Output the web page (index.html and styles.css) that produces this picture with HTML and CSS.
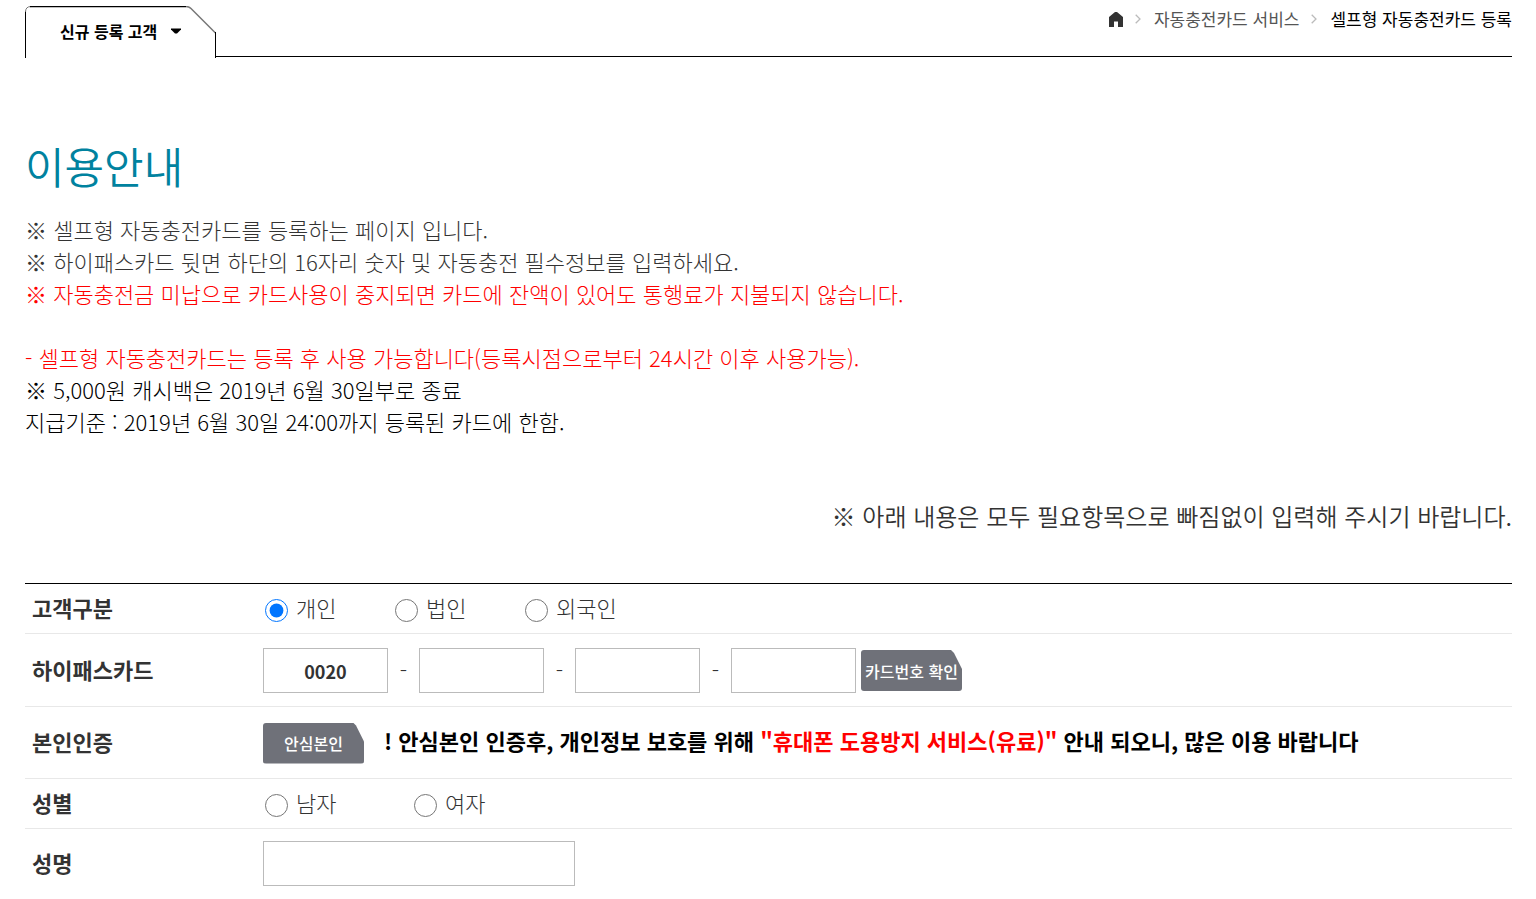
FILE: index.html
```html
<!DOCTYPE html>
<html lang="ko">
<head>
  <meta charset="UTF-8">
  <title>셀프형 자동충전카드 등록</title>
  <link rel="stylesheet" href="styles.css">
</head>
<body>
  <header class="top">
    <button type="button" class="tab">
      <svg class="tab-line" viewBox="0 0 191 52" fill="none">
        <path d="M.5 52V5" stroke="#000"/>
        <path d="M.5 6Q.5 .5 6 .5" stroke="#777"/>
        <path d="M5 .5H161" stroke="#000" stroke-width="1.400"/>
        <path d="M161 .5Q164 .5 166 2.500L190.500 27" stroke="#777" stroke-width="1.500"/>
        <path d="M190.500 26V52" stroke="#000"/>
      </svg>
      <span>신규 등록 고객</span>
      <svg class="tab-arrow" viewBox="0 0 10 6"><path d="M0 .5H10V1.500L6 5.500H4L0 1.500Z" fill="#000"/></svg>
    </button>
    <nav class="path">
      <a href="#" aria-label="홈"><svg class="home" viewBox="0 0 14 15"><path d="M6 0H8L14 5V15H9V9.500H5V15H0V5Z" fill="#333"/></svg></a>
      <svg class="next" viewBox="0 0 6 10"><path d="M.7 .7L5 5L.7 9.300" fill="none" stroke="#bbb" stroke-width="1.300"/></svg>
      <a href="#">자동충전카드 서비스</a>
      <svg class="next" viewBox="0 0 6 10"><path d="M.7 .7L5 5L.7 9.300" fill="none" stroke="#bbb" stroke-width="1.300"/></svg>
      <a href="#" class="current">셀프형 자동충전카드 등록</a>
    </nav>
  </header>

  <main>
    <h1>이용안내</h1>
    <div class="guide">
      <p>※ 셀프형 자동충전카드를 등록하는 페이지 입니다.</p>
      <p>※ 하이패스카드 뒷면 하단의 16자리 숫자 및 자동충전 필수정보를 입력하세요.</p>
      <p class="red">※ 자동충전금 미납으로 카드사용이 중지되면 카드에 잔액이 있어도 통행료가 지불되지 않습니다.</p>
      <br>
      <p class="red">- 셀프형 자동충전카드는 등록 후 사용 가능합니다(등록시점으로부터 24시간 이후 사용가능).</p>
      <p class="black">※ 5,000원 캐시백은 2019년 6월 30일부로 종료</p>
      <p class="black">지급기준 : 2019년 6월 30일 24:00까지 등록된 카드에 한함.</p>
    </div>
    <p class="notice">※ 아래 내용은 모두 필요항목으로 빠짐없이 입력해 주시기 바랍니다.</p>

    <form class="form">
      <div class="row short" role="radiogroup" aria-labelledby="type">
        <span class="title" id="type">고객구분</span>
        <div class="field types">
          <label><input type="radio" name="type" checked>개인</label>
          <label><input type="radio" name="type">법인</label>
          <label><input type="radio" name="type">외국인</label>
        </div>
      </div>
      <div class="row">
        <label class="title" for="card1">하이패스카드</label>
        <div class="field card">
          <input type="text" id="card1" value="0020" maxlength="4">
          <span>-</span>
          <input type="text" aria-label="카드번호 2" maxlength="4">
          <span>-</span>
          <input type="text" aria-label="카드번호 3" maxlength="4">
          <span>-</span>
          <input type="text" aria-label="카드번호 4" maxlength="4">
          <button type="button" class="btn">카드번호 확인</button>
        </div>
      </div>
      <div class="row">
        <span class="title">본인인증</span>
        <div class="field">
          <button type="button" class="btn">안심본인</button>
          <strong class="info">! 안심본인 인증후, 개인정보 보호를 위해 <span class="red">"휴대폰 도용방지 서비스(유료)"</span> 안내 되오니, 많은 이용 바랍니다</strong>
        </div>
      </div>
      <div class="row short" role="radiogroup" aria-labelledby="gender">
        <span class="title" id="gender">성별</span>
        <div class="field genders">
          <label><input type="radio" name="gender">남자</label>
          <label><input type="radio" name="gender">여자</label>
        </div>
      </div>
      <div class="row">
        <label class="title" for="name">성명</label>
        <div class="field">
          <input type="text" class="name" id="name">
        </div>
      </div>
    </form>
  </main>
</body>
</html>
```
FILE: styles.css
```css
* {
  box-sizing: border-box;
}
body {
  margin: 0;
  padding: 6px 24px 0 25px;
  background-color: #fff;
  color: #333;
  font-family: "Noto Sans CJK KR", sans-serif;
  font-size: 22px;
  font-weight: 300;
  line-height: 32px;
}
p, h1 {
  margin: 0;
}
a {
  color: #555;
  text-decoration: none;
}
button, input {
  font-family: inherit;
}
.red {
  color: #f00;
}
.black {
  color: #000;
}

/* header */
.top {
  display: flex;
}
.tab {
  position: relative;
  display: flex;
  align-items: center;
  gap: 14px;
  width: 191px;
  height: 52px;
  padding: 0 0 2px 35px;
  border: 0;
  background: none;
  color: #000;
  font-size: 16px;
  font-weight: 700;
  white-space: nowrap;
}
.tab-line {
  position: absolute;
  top: 0;
  left: 0;
  width: 100%;
  height: 100%;
}
.tab-arrow {
  width: 10px;
  height: 6px;
}
.path {
  flex: 1;
  display: flex;
  justify-content: flex-end;
  align-items: center;
  height: 51px;
  padding-bottom: 24px;
  border-bottom: 1px solid #000;
  font-size: 17px;
  font-weight: 400;
}
.path .current {
  color: #000;
}
.home {
  display: block;
  width: 14px;
  height: 15px;
}
.next {
  width: 6px;
  height: 10px;
  margin: 0 13px 0 12px;
}

/* guide */
h1 {
  margin-top: 75px;
  color: #00829f;
  font-size: 43px;
  font-weight: 350;
  line-height: 64px;
}
.guide {
  margin-top: 16px;
}
.notice {
  margin-top: 63px;
  font-size: 24px;
  font-weight: 350;
  text-align: right;
}

/* form */
.form {
  margin-top: 51px;
  border-top: 1px solid #000;
}
.row {
  display: flex;
  align-items: center;
  min-height: 72px;
  padding: 14px 0 13px;
  border-bottom: 1px solid #e8e8e8;
}
.row:last-child {
  min-height: 0;
  padding: 12px 0;
  border-bottom: 0;
}
.short {
  min-height: 50px;
  padding: 0;
}
.title {
  width: 238px;
  padding: 0 0 4px 7px;
  font-weight: 700;
}
.field {
  flex: 1;
  display: flex;
  align-items: center;
}
.field label {
  display: flex;
  align-items: center;
  padding-bottom: 4px;
}
.types label {
  width: 130px;
}
.genders label {
  width: 149px;
}
input[type="radio"] {
  width: 23px;
  height: 23px;
  margin: 8px 8px 0 2px;
}
input[type="text"] {
  width: 125px;
  height: 45px;
  border: 1px solid #bbb;
  color: #333;
  font-size: 18px;
  font-weight: 700;
  text-align: center;
}
.card span {
  width: 31px;
  padding-bottom: 4px;
  text-align: center;
}
.card .btn {
  margin-left: 5px;
}
input.name {
  width: 312px;
  text-align: left;
}
.btn {
  width: 101px;
  height: 41px;
  padding: 0;
  border: 0;
  border-radius: 3px;
  background-color: #6f7179;
  clip-path: polygon(0 0, 90px 0, 93px 3px, 100% 19px, 100% 100%, 0 100%);
  color: #fff;
  font-size: 16px;
  font-weight: 500;
  white-space: nowrap;
}
.info {
  margin-left: 20px;
  padding-bottom: 6px;
  color: #000;
  font-weight: 700;
}
```
